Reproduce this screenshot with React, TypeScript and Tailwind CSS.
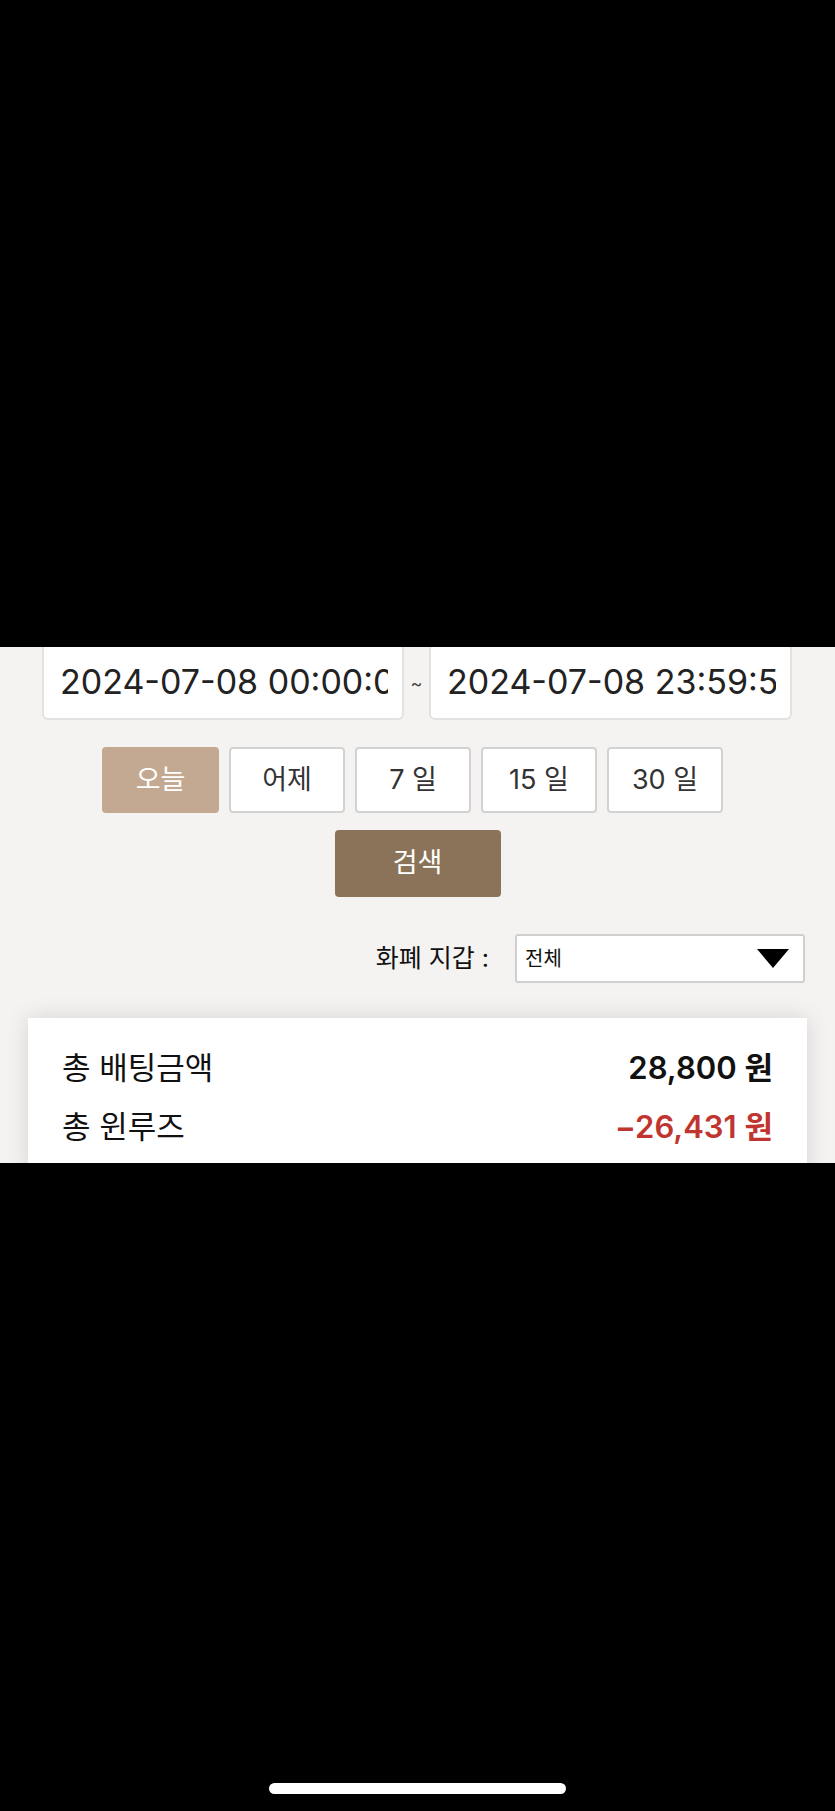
import React from 'react';

const FONT = "font-['Inter','Noto_Sans_CJK_KR',sans-serif]";

const periods = ['오늘', '어제', '7 일', '15 일', '30 일'];

const App: React.FC = () => {
  return (
    <div className={`w-[835px] h-[1811px] bg-black flex flex-col ${FONT}`}>
      <div className="h-[647px] shrink-0"></div>

      <div className="h-[516px] shrink-0 bg-[#f4f3f1] overflow-hidden">
        {/* date range */}
        <div className="flex items-center pl-[42px] pr-[43px] -mt-[4px]">
          <input
            readOnly
            value="2024-07-08 00:00:00"
            className="w-[362px] h-[77px] bg-white border-2 border-[#e3e2e0] rounded-[6px] pl-[16px] pr-[14px] text-[34px] text-[#222] outline-none"
          />
          <span className="w-[25px] text-center text-[18px] text-[#444] pt-[4px]">~</span>
          <input
            readOnly
            value="2024-07-08 23:59:59"
            className="w-[363px] h-[77px] bg-white border-2 border-[#e3e2e0] rounded-[6px] pl-[16px] pr-[14px] text-[34px] text-[#222] outline-none"
          />
        </div>

        {/* quick periods */}
        <div className="flex justify-center gap-[10px] mt-[27px] pr-[10px]">
          {periods.map((p, i) => (
            <button
              key={p}
              className={
                i === 0
                  ? 'w-[117px] h-[66px] rounded-[4px] bg-[#c4a992] text-white text-[27px]'
                  : 'w-[116px] h-[66px] rounded-[4px] bg-white border-2 border-[#d2d2d2] text-[#333] text-[27px]'
              }
            >
              {p}
            </button>
          ))}
        </div>

        <div className="flex justify-center mt-[17px]">
          <button className="w-[166px] h-[67px] rounded-[4px] bg-[#8b7359] text-white text-[27px]">검색</button>
        </div>

        {/* wallet filter */}
        <div className="flex justify-end items-center gap-[26px] pr-[30px] mt-[37px]">
          <span className="text-[25px] text-[#111]">화폐 지갑 :</span>
          <div className="w-[290px] h-[49px] bg-white border-2 border-[#cfcfcf] rounded-[3px] flex items-center justify-between pl-[8px] pr-[14px]">
            <span className="text-[20px] text-[#111]">전체</span>
            <svg width="32" height="19" viewBox="0 0 32 19">
              <path d="M0 0 L32 0 L16 19 Z" fill="#000" />
            </svg>
          </div>
        </div>

        {/* summary */}
        <div className="mx-[28px] w-[779px] mt-[35px] bg-white shadow-[0_0_22px_rgba(0,0,0,0.13)] px-[34px] pt-[33px] pb-[30px] flex flex-col gap-[24px]">
          <div className="flex justify-between items-center h-[35px]">
            <span className="text-[31px] text-[#111]">총 배팅금액</span>
            <span className="text-[31px] font-semibold text-[#111]">28,800 원</span>
          </div>
          <div className="flex justify-between items-center h-[35px]">
            <span className="text-[31px] text-[#111]">총 윈루즈</span>
            <span className="text-[31px] font-semibold text-[#c0352f]">−26,431 원</span>
          </div>
        </div>
      </div>

      <div className="flex-1 flex items-end justify-center pb-[17px]">
        <div className="w-[297px] h-[11px] rounded-full bg-white"></div>
      </div>
    </div>
  );
};

export default App;
